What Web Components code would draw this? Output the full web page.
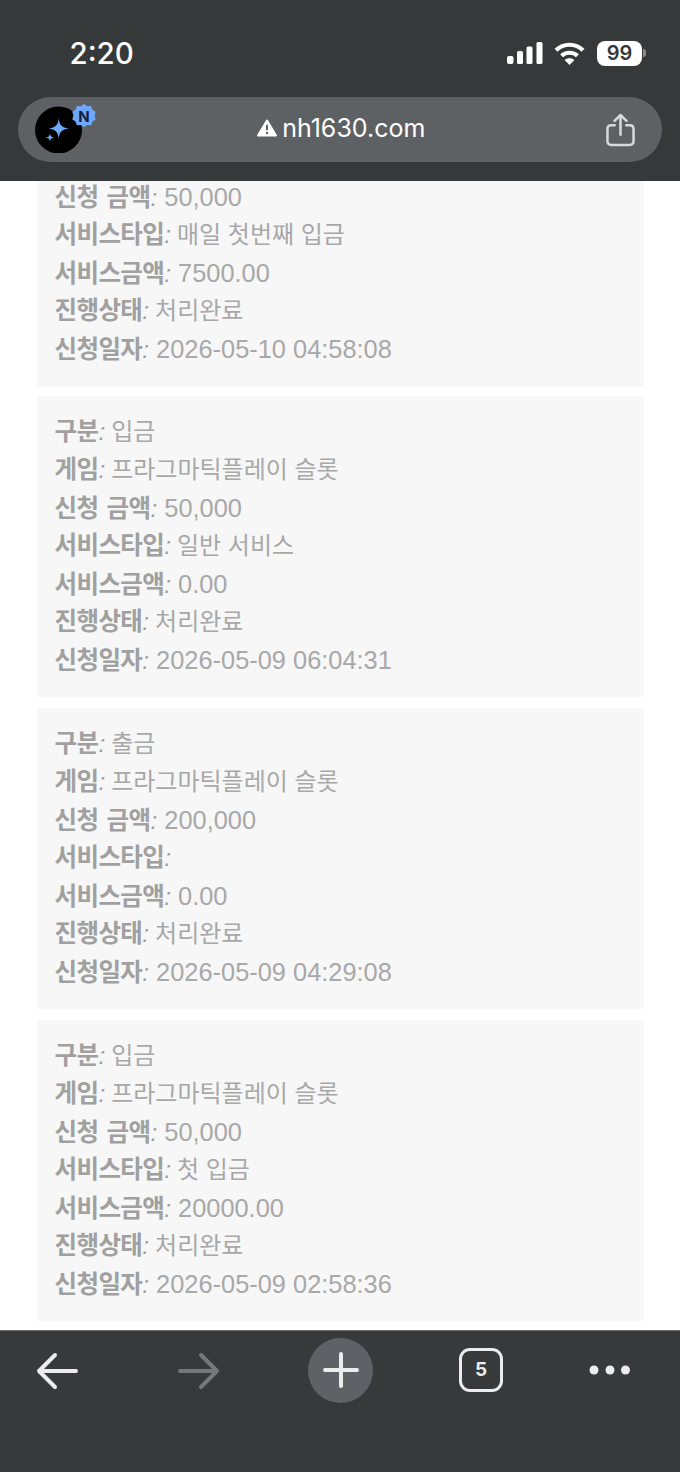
<!DOCTYPE html>
<html lang="ko">
<head>
<meta charset="utf-8">
<title>nh1630.com</title>
<style>
  html, body { margin: 0; padding: 0; background: #fff; }
  body { width: 680px; height: 1472px; overflow: hidden; font-family: "Liberation Sans", "Noto Sans CJK KR", sans-serif; }
</style>
</head>
<body>
<browser-frame>
  <record-card slot="content" clipped>
    <record-row num><span slot="label">신청 금액</span>50,000</record-row>
    <record-row><span slot="label">서비스타입</span>매일 첫번째 입금</record-row>
    <record-row num><span slot="label">서비스금액</span>7500.00</record-row>
    <record-row><span slot="label">진행상태</span>처리완료</record-row>
    <record-row num><span slot="label">신청일자</span>2026-05-10 04:58:08</record-row>
  </record-card>
  <record-card slot="content">
    <record-row><span slot="label">구분</span>입금</record-row>
    <record-row><span slot="label">게임</span>프라그마틱플레이 슬롯</record-row>
    <record-row num><span slot="label">신청 금액</span>50,000</record-row>
    <record-row><span slot="label">서비스타입</span>일반 서비스</record-row>
    <record-row num><span slot="label">서비스금액</span>0.00</record-row>
    <record-row><span slot="label">진행상태</span>처리완료</record-row>
    <record-row num><span slot="label">신청일자</span>2026-05-09 06:04:31</record-row>
  </record-card>
  <record-card slot="content">
    <record-row><span slot="label">구분</span>출금</record-row>
    <record-row><span slot="label">게임</span>프라그마틱플레이 슬롯</record-row>
    <record-row num><span slot="label">신청 금액</span>200,000</record-row>
    <record-row><span slot="label">서비스타입</span></record-row>
    <record-row num><span slot="label">서비스금액</span>0.00</record-row>
    <record-row><span slot="label">진행상태</span>처리완료</record-row>
    <record-row num><span slot="label">신청일자</span>2026-05-09 04:29:08</record-row>
  </record-card>
  <record-card slot="content">
    <record-row><span slot="label">구분</span>입금</record-row>
    <record-row><span slot="label">게임</span>프라그마틱플레이 슬롯</record-row>
    <record-row num><span slot="label">신청 금액</span>50,000</record-row>
    <record-row><span slot="label">서비스타입</span>첫 입금</record-row>
    <record-row num><span slot="label">서비스금액</span>20000.00</record-row>
    <record-row><span slot="label">진행상태</span>처리완료</record-row>
    <record-row num><span slot="label">신청일자</span>2026-05-09 02:58:36</record-row>
  </record-card>
</browser-frame>

<script>
/* Top of the phone screen: clock, status icons and the address pill */
class StatusBar extends HTMLElement {
  constructor() {
    super();
    this.attachShadow({ mode: "open" });
    this.shadowRoot.innerHTML = `
      <style>
        :host { display: flex; align-items: center; height: 40px; padding: 33px 34px 0 69.5px; color: #fff; }
        .time { font: 500 29.5px/40px Inter, "Liberation Sans", sans-serif; flex: 1; }
        .icons { display: flex; align-items: center; }
        svg { display: block; }
        .battery { width: 45px; height: 25px; margin-left: 12px; background: #fff; border-radius: 8px;
          color: #36393a; font: 600 20px/25px Inter, "Liberation Sans", sans-serif; text-align: center; }
        .nub { width: 3px; height: 8px; margin-left: 1px; background: #8b8d8e; border-radius: 0 3px 3px 0; }
      </style>
      <div class="time">2:20</div>
      <div class="icons">
        <svg width="36" height="22" viewBox="0 0 36 22" fill="#fff">
          <rect x="0" y="14" width="6.5" height="8" rx="2"/>
          <rect x="10" y="9" width="6" height="13" rx="1.5"/>
          <rect x="19.5" y="4.5" width="6" height="17.5" rx="1.5"/>
          <rect x="29.5" y="0" width="6" height="22" rx="1.5"/>
        </svg>
        <svg style="margin-left:11px" width="31" height="23" viewBox="0 0 31 23" fill="none" stroke="#fff" stroke-width="4.2">
          <path d="M2 8.3C9.5 .9 21.5 .9 29 8.3"/>
          <path d="M7.6 13.8C11.8 9.7 19.2 9.7 23.4 13.8"/>
          <path d="M15.5 23L10.6 18c2.7-2.3 7.100-2.300 9.800 0z" fill="#fff" stroke="none"/>
        </svg>
        <div class="battery">99</div>
        <div class="nub"></div>
      </div>
    `;
  }
}

class UrlBar extends HTMLElement {
  constructor() {
    super();
    this.attachShadow({ mode: "open" });
    this.shadowRoot.innerHTML = `
      <style>
        :host { display: flex; align-items: center; height: 65px; margin: 24px 18px 0; padding: 0 27.5px 0 17px;
          background: #5e6164; border-radius: 33px; color: #fff; }
        .logo { width: 62px; height: 50px; flex: none; margin-bottom: 4px; }
        .addr { flex: 1; display: flex; align-items: center; justify-content: center; gap: 5px; padding: 0 20px 4px 0;
          font: 400 25px/30px Inter, "Liberation Sans", sans-serif; }
        svg { display: block; }
      </style>
      <svg class="logo" viewBox="0 0 62 50">
        <circle cx="23.5" cy="27" r="23.5" fill="#000"/>
        <path d="M23.7 15.5C24.5 22 26.500 24.500 33.700 25.500C26.500 26.500 24.500 29 23.700 35.500C22.900 29 20.900 26.500 13.700 25.500C20.900 24.500 22.900 22 23.700 15.500z" fill="#6ea8f8"/>
        <path d="M15 30C15.300 33 16 34 19.500 34.500C16 35 15.300 36 15 39C14.700 36 14 35 10.500 34.500C14 34 14.700 33 15 30z" fill="#6ea8f8"/>
        <path d="M49 1l3.200 2.300 3.900-.3 1.300 3.700 3.300 2.100-1.100 3.800 1.100 3.800-3.300 2.100-1.300 3.700-3.900-.3L49 24.200l-3.200-2.300-3.900.3-1.300-3.700-3.300-2.100 1.100-3.800-1.100-3.800 3.300-2.100 1.300-3.700 3.900.3z" fill="#6ea8f8"/>
        <text x="49" y="18.500" text-anchor="middle" font-family="Inter, 'Liberation Sans', sans-serif" font-weight="700" font-size="15" fill="#12213f">N</text>
      </svg>
      <div class="addr">
        <svg width="20" height="18" viewBox="0 0 20 18">
          <path d="M10 1.500L19 16.500H1z" fill="#fff" stroke="#fff" stroke-width="2" stroke-linejoin="round"/>
          <rect x="9" y="5.500" width="2" height="6" rx="1" fill="#5e6164"/>
          <circle cx="10" cy="14" r="1.200" fill="#5e6164"/>
        </svg>
        <span>nh1630.com</span>
      </div>
      <svg width="29" height="34" viewBox="0 0 30 34" fill="none" stroke="#d8d9da" stroke-width="2.600" stroke-linecap="round" stroke-linejoin="round">
        <path d="M9 12H5.500Q1.500 12 1.500 16V28.500Q1.500 32.500 5.500 32.500H24.500Q28.500 32.500 28.500 28.500V16Q28.500 12 24.500 12H21"/>
        <path d="M15 22V1.800M8.800 7.500L15 1.500L21.200 7.500"/>
      </svg>
    `;
  }
}

/* One line of a record: bold label, slanted colon, value. "num" rows hold latin digits, set a bit larger */
class RecordRow extends HTMLElement {
  constructor() {
    super();
    this.attachShadow({ mode: "open" });
    this.shadowRoot.innerHTML = `
      <style>
        :host { display: block; height: 38px; font-size: 24px; line-height: 38px; color: #a8a8a8; white-space: nowrap; }
        :host([num]) { font-size: 25.4px; }
        .label { font-size: 24.5px; font-weight: 700; color: #a0a0a0; letter-spacing: -0.6px; word-spacing: 2px; }
        .colon { font-size: 24.5px; font-style: italic; color: #a0a0a0; margin-right: 6px; }
        :host([num]) .colon { margin-right: 7px; }
      </style>
      <span class="label"><slot name="label"></slot></span><span class="colon">:</span><slot></slot>
    `;
  }
}

class RecordCard extends HTMLElement {
  constructor() {
    super();
    this.attachShadow({ mode: "open" });
    this.shadowRoot.innerHTML = `
      <style>
        :host { display: block; box-sizing: border-box; height: 301px; margin: 0 36px 11px 37px; padding: 16.5px 18px 0 17.5px;
          background: #f7f7f7; border-radius: 2px; }
        :host([clipped]) { height: 208px; margin-bottom: 10px; padding-top: 0; border-radius: 0 0 2px 2px; }
      </style>
      <slot></slot>
    `;
  }
}

class BottomBar extends HTMLElement {
  constructor() {
    super();
    this.attachShadow({ mode: "open" });
    this.shadowRoot.innerHTML = `
      <style>
        :host { display: flex; align-items: flex-start; box-sizing: border-box; height: 142px; padding: 6.5px 0 0 36px;
          background: #363a3a; border-top: 1px solid #6c6e6e; }
        svg { display: block; flex: none; }
        .plus { margin-left: 88px; width: 65px; height: 65px; border-radius: 50%; background: #5e6266; flex: none;
          display: flex; align-items: center; justify-content: center; }
        .tabs { box-sizing: border-box; margin: 10.5px 0 0 86px; width: 44px; height: 44px; border: 3.5px solid #ececec;
          border-radius: 11px; color: #ececec; font: 700 19px/37px Inter, "Liberation Sans", sans-serif; text-align: center; flex: none; }
      </style>
      <svg style="margin-top:13px" width="44" height="40" viewBox="0 0 44 40" fill="none" stroke="#ececec" stroke-width="4" stroke-linecap="round" stroke-linejoin="round">
        <path d="M40 20H3M19 4L3 20L19 36"/>
      </svg>
      <svg style="margin:13px 0 0 96px" width="44" height="40" viewBox="0 0 44 40" fill="none" stroke="#767878" stroke-width="4" stroke-linecap="round" stroke-linejoin="round">
        <path d="M4 20H41M25 4L41 20L25 36"/>
      </svg>
      <div class="plus">
        <svg width="36" height="36" viewBox="0 0 36 36" stroke="#ececec" stroke-width="4" stroke-linecap="round">
          <path d="M18 2V34M2 18H34"/>
        </svg>
      </div>
      <div class="tabs">5</div>
      <svg style="margin:27.5px 0 0 85px" width="44" height="10" viewBox="0 0 44 10" fill="#ececec">
        <circle cx="6" cy="5" r="4.5"/><circle cx="22" cy="5" r="4.5"/><circle cx="37.5" cy="5" r="4.5"/>
      </svg>
    `;
  }
}

class BrowserFrame extends HTMLElement {
  constructor() {
    super();
    this.attachShadow({ mode: "open" });
    this.shadowRoot.innerHTML = `
      <style>
        :host { display: flex; flex-direction: column; height: 1472px; }
        .top { background: #36393a; height: 181px; flex: none; overflow: hidden; }
        .page { flex: 1; min-height: 0; overflow: hidden; background: #fff; }
        .list { margin-top: -3px; }
      </style>
      <div class="top">
        <status-bar></status-bar>
        <url-bar></url-bar>
      </div>
      <div class="page"><div class="list"><slot name="content"></slot></div></div>
      <bottom-bar></bottom-bar>
    `;
  }
}

customElements.define("status-bar", StatusBar);
customElements.define("url-bar", UrlBar);
customElements.define("record-row", RecordRow);
customElements.define("record-card", RecordCard);
customElements.define("bottom-bar", BottomBar);
customElements.define("browser-frame", BrowserFrame);
</script>
</body>
</html>
